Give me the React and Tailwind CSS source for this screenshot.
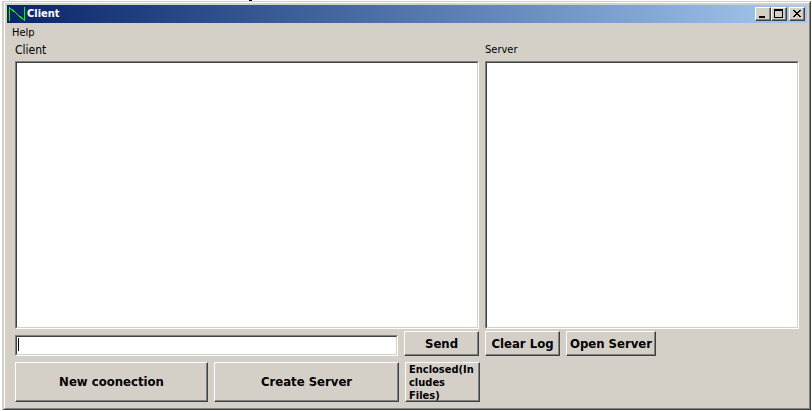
import React from "react";

function PushButton({ className = "", children }) {
  return (
    <button
      type="button"
      className={`shrink-0 overflow-hidden border border-t-white border-l-white border-r-[#404040] border-b-[#404040] bg-[#d4d0c8] font-bold text-black shadow-[inset_-1px_-1px_0_#808080] ${className}`}
    >
      {children}
    </button>
  );
}

function CaptionButton({ label, children }) {
  return (
    <button
      type="button"
      aria-label={label}
      className="h-[14px] w-4 border border-t-white border-l-white border-r-[#404040] border-b-[#404040] bg-[#d4d0c8] shadow-[inset_-1px_-1px_0_#808080]"
    >
      <svg viewBox="0 0 14 12" className="block h-3 w-[14px]" shapeRendering="crispEdges">
        {children}
      </svg>
    </button>
  );
}

function SunkenField({ className = "", children }) {
  return (
    <div
      className={`relative border border-t-[#808080] border-l-[#808080] border-r-white border-b-white bg-white ${className}`}
    >
      <div className="flex h-full border border-t-[#404040] border-l-[#404040] border-r-[#d4d0c8] border-b-[#d4d0c8]">
        {children}
      </div>
    </div>
  );
}

export default function App() {
  return (
    <div className="relative h-screen bg-white pt-px pr-px pb-px pl-0.5 font-['Tahoma','DejaVu_Sans_Condensed','DejaVu_Sans',sans-serif] text-black">
      <span className="absolute top-0 left-[249px] h-px w-[3px] bg-black" />
      <main className="h-full border border-t-[#d4d0c8] border-l-2 border-l-[#d4d0c8] border-r-[#404040] border-b-[#404040]">
        <div className="flex h-full flex-col border border-t-white border-l-white border-r-[#808080] border-b-[#808080] bg-[#d4d0c8] px-0.5 pt-0.5 pb-1.5">
          <header className="flex h-[18px] shrink-0 items-center bg-linear-to-r from-[#0a246a] to-[#a6caf0] pr-0.5">
            <svg viewBox="0 0 18 18" className="h-[18px] w-[18px] shrink-0" fill="none" stroke="#00ff00" aria-hidden="true">
              <path d="M2.5 2v14M17.5 2v14" shapeRendering="crispEdges" />
              <path d="M2.5 2.5l15 13" shapeRendering="crispEdges" />
            </svg>
            <h1 className="flex-1 pl-0.5 text-[11px] leading-4 font-bold text-white">Client</h1>
            <CaptionButton label="Minimize">
              <path d="M3 8h6v2H3z" />
            </CaptionButton>
            <CaptionButton label="Maximize">
              <path d="M2 1h9v9H2zM3 3v6h7V3z" fillRule="evenodd" />
            </CaptionButton>
            <span className="w-0.5" />
            <CaptionButton label="Close">
              <path d="M3 2h2v1h1v1h2V3h1V2h2v1h-1v1H9v1H8v1h1v1h1v1h1v1H9V8H8V7H6v1H5v1H3V8h1V7h1V6h1V5H5V4H4V3H3z" />
            </CaptionButton>
          </header>

          <nav className="flex h-5 shrink-0 items-center pl-[5px]">
            <button type="button" className="text-[11px] leading-4">Help</button>
          </nav>

          <div className="flex min-h-0 flex-1 gap-1.5 px-2">
            <section className="flex min-w-0 flex-[464] flex-col">
              <label htmlFor="client-log" className="h-[18px] text-xs leading-[14px]">Client</label>
              <SunkenField className="min-h-0 flex-1">
                <textarea id="client-log" className="w-full resize-none p-1 text-xs outline-none" />
              </SunkenField>
              <div className="mt-0.5 flex items-end gap-1.5">
                <SunkenField className="h-[21px] min-w-0 flex-1">
                  <input
                    type="text"
                    aria-label="Message"
                    className="w-full min-w-0 px-0.5 text-xs outline-none"
                  />
                  <span className="pointer-events-none absolute top-0.5 left-0.5 h-[13px] w-px bg-black" />
                </SunkenField>
                <PushButton className="h-[25px] w-[75px] text-[13px]">Send</PushButton>
              </div>
            </section>

            <section className="flex min-w-0 flex-[314] flex-col">
              <label htmlFor="server-log" className="h-[18px] text-[11px] leading-[14px]">Server</label>
              <SunkenField className="min-h-0 flex-1">
                <textarea id="server-log" className="w-full resize-none p-1 text-xs outline-none" />
              </SunkenField>
              <div className="mt-0.5 flex gap-1.5">
                <PushButton className="h-[25px] w-[75px] text-[13px]">Clear Log</PushButton>
                <PushButton className="h-[25px] w-[90px] text-[13px]">Open Server</PushButton>
              </div>
            </section>
          </div>

          <div className="mt-1.5 flex shrink-0 gap-1.5 px-2">
            <PushButton className="h-10 w-[193px] text-[13px]">New coonection</PushButton>
            <PushButton className="h-10 w-[185px] text-[13px]">Create Server</PushButton>
            <PushButton className="h-10 w-[75px] pl-[3px] text-left text-[11px] leading-[13px]">
              Enclosed(In
              <br />
              cludes
              <br />
              Files)
            </PushButton>
          </div>
        </div>
      </main>
    </div>
  );
}
